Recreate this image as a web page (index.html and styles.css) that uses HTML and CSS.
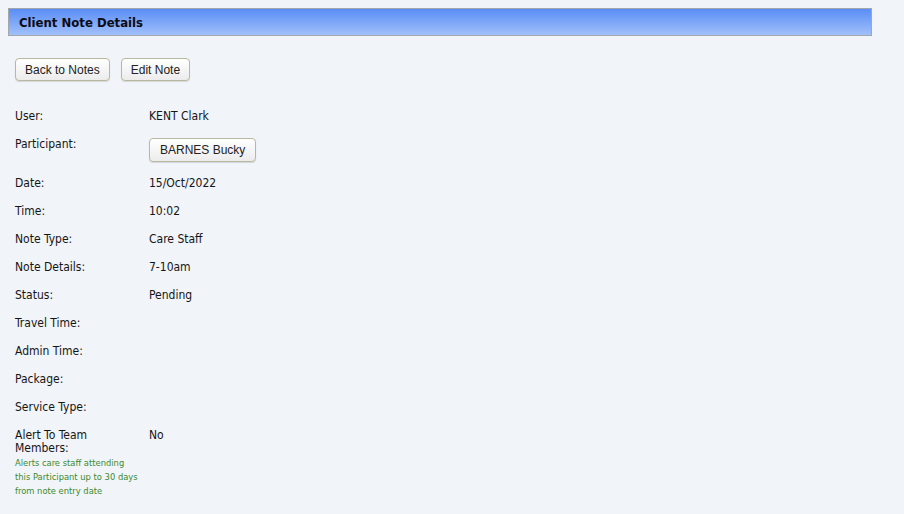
FILE: index.html
```html
<!DOCTYPE html>
<html>
<head>
<meta charset="utf-8">
<link rel="stylesheet" href="styles.css">
</head>
<body>
<div class="page">
  <div class="titlebar">Client Note Details</div>
  <div class="actions">
    <button class="btn">Back to Notes</button>
    <button class="btn">Edit Note</button>
  </div>
  <div class="details">
    <div class="row"><div class="label">User:</div><div class="value">KENT Clark</div></div>
    <div class="row row-btn"><div class="label">Participant:</div><div class="value"><button class="btn btn-part">BARNES Bucky</button></div></div>
    <div class="row"><div class="label">Date:</div><div class="value">15/Oct/2022</div></div>
    <div class="row"><div class="label">Time:</div><div class="value">10:02</div></div>
    <div class="row"><div class="label">Note Type:</div><div class="value">Care Staff</div></div>
    <div class="row"><div class="label">Note Details:</div><div class="value">7-10am</div></div>
    <div class="row"><div class="label">Status:</div><div class="value">Pending</div></div>
    <div class="row"><div class="label">Travel Time:</div><div class="value"></div></div>
    <div class="row"><div class="label">Admin Time:</div><div class="value"></div></div>
    <div class="row"><div class="label">Package:</div><div class="value"></div></div>
    <div class="row"><div class="label">Service Type:</div><div class="value"></div></div>
    <div class="row"><div class="label">Alert To Team Members:<div class="hint"><span>Alerts care staff attending</span> <span>this Participant up to 30 days</span> <span>from note entry date</span></div></div><div class="value">No</div></div>
  </div>
</div>
</body>
</html>
```
FILE: styles.css
```css
html, body {
  margin: 0;
  padding: 0;
  background: #f1f4f8;
}
body {
  font-family: "DejaVu Sans Condensed", "DejaVu Sans", Verdana, sans-serif;
  font-size: 12px;
  color: #151515;
}
.page {
  padding: 8px 32px 0 8px;
}
.titlebar {
  height: 26px;
  border: 1px solid #a3a6aa;
  background: linear-gradient(to bottom, #5a8df5, #a1c0fb);
  font-weight: bold;
  font-size: 13px;
  line-height: 27px;
  padding-left: 10px;
  color: #0c0c14;
}
.actions {
  display: flex;
  gap: 11px;
  padding: 22px 0 0 7px;
}
.btn {
  font-family: "Liberation Sans", Arial, sans-serif;
  font-size: 12px;
  color: #222;
  height: 23px;
  padding: 0 9px;
  border: 1px solid #b9b89e;
  border-radius: 4px;
  background: linear-gradient(to bottom, #ffffff, #ececec);
  box-shadow: 0 1px 1px rgba(0,0,0,0.12);
}
.details {
  padding: 29px 0 0 7px;
}
.row {
  display: flex;
  min-height: 28px;
}
.row-btn {
  min-height: 39px;
}
.label {
  width: 134px;
  line-height: 13px;
}
.row:last-child .label {
  width: 125px;
  padding-right: 9px;
}
.value {
  line-height: 13px;
}
.btn-part {
  height: 24px;
  margin-top: 0;
  padding: 0 10px;
  font-size: 12px;
}
.hint {
  color: #3b8a2e;
  font-size: 9.3px;
  line-height: 14px;
  margin-top: 1px;
  width: 125px;
}
.hint span {
  display: block;
  white-space: nowrap;
}
```
